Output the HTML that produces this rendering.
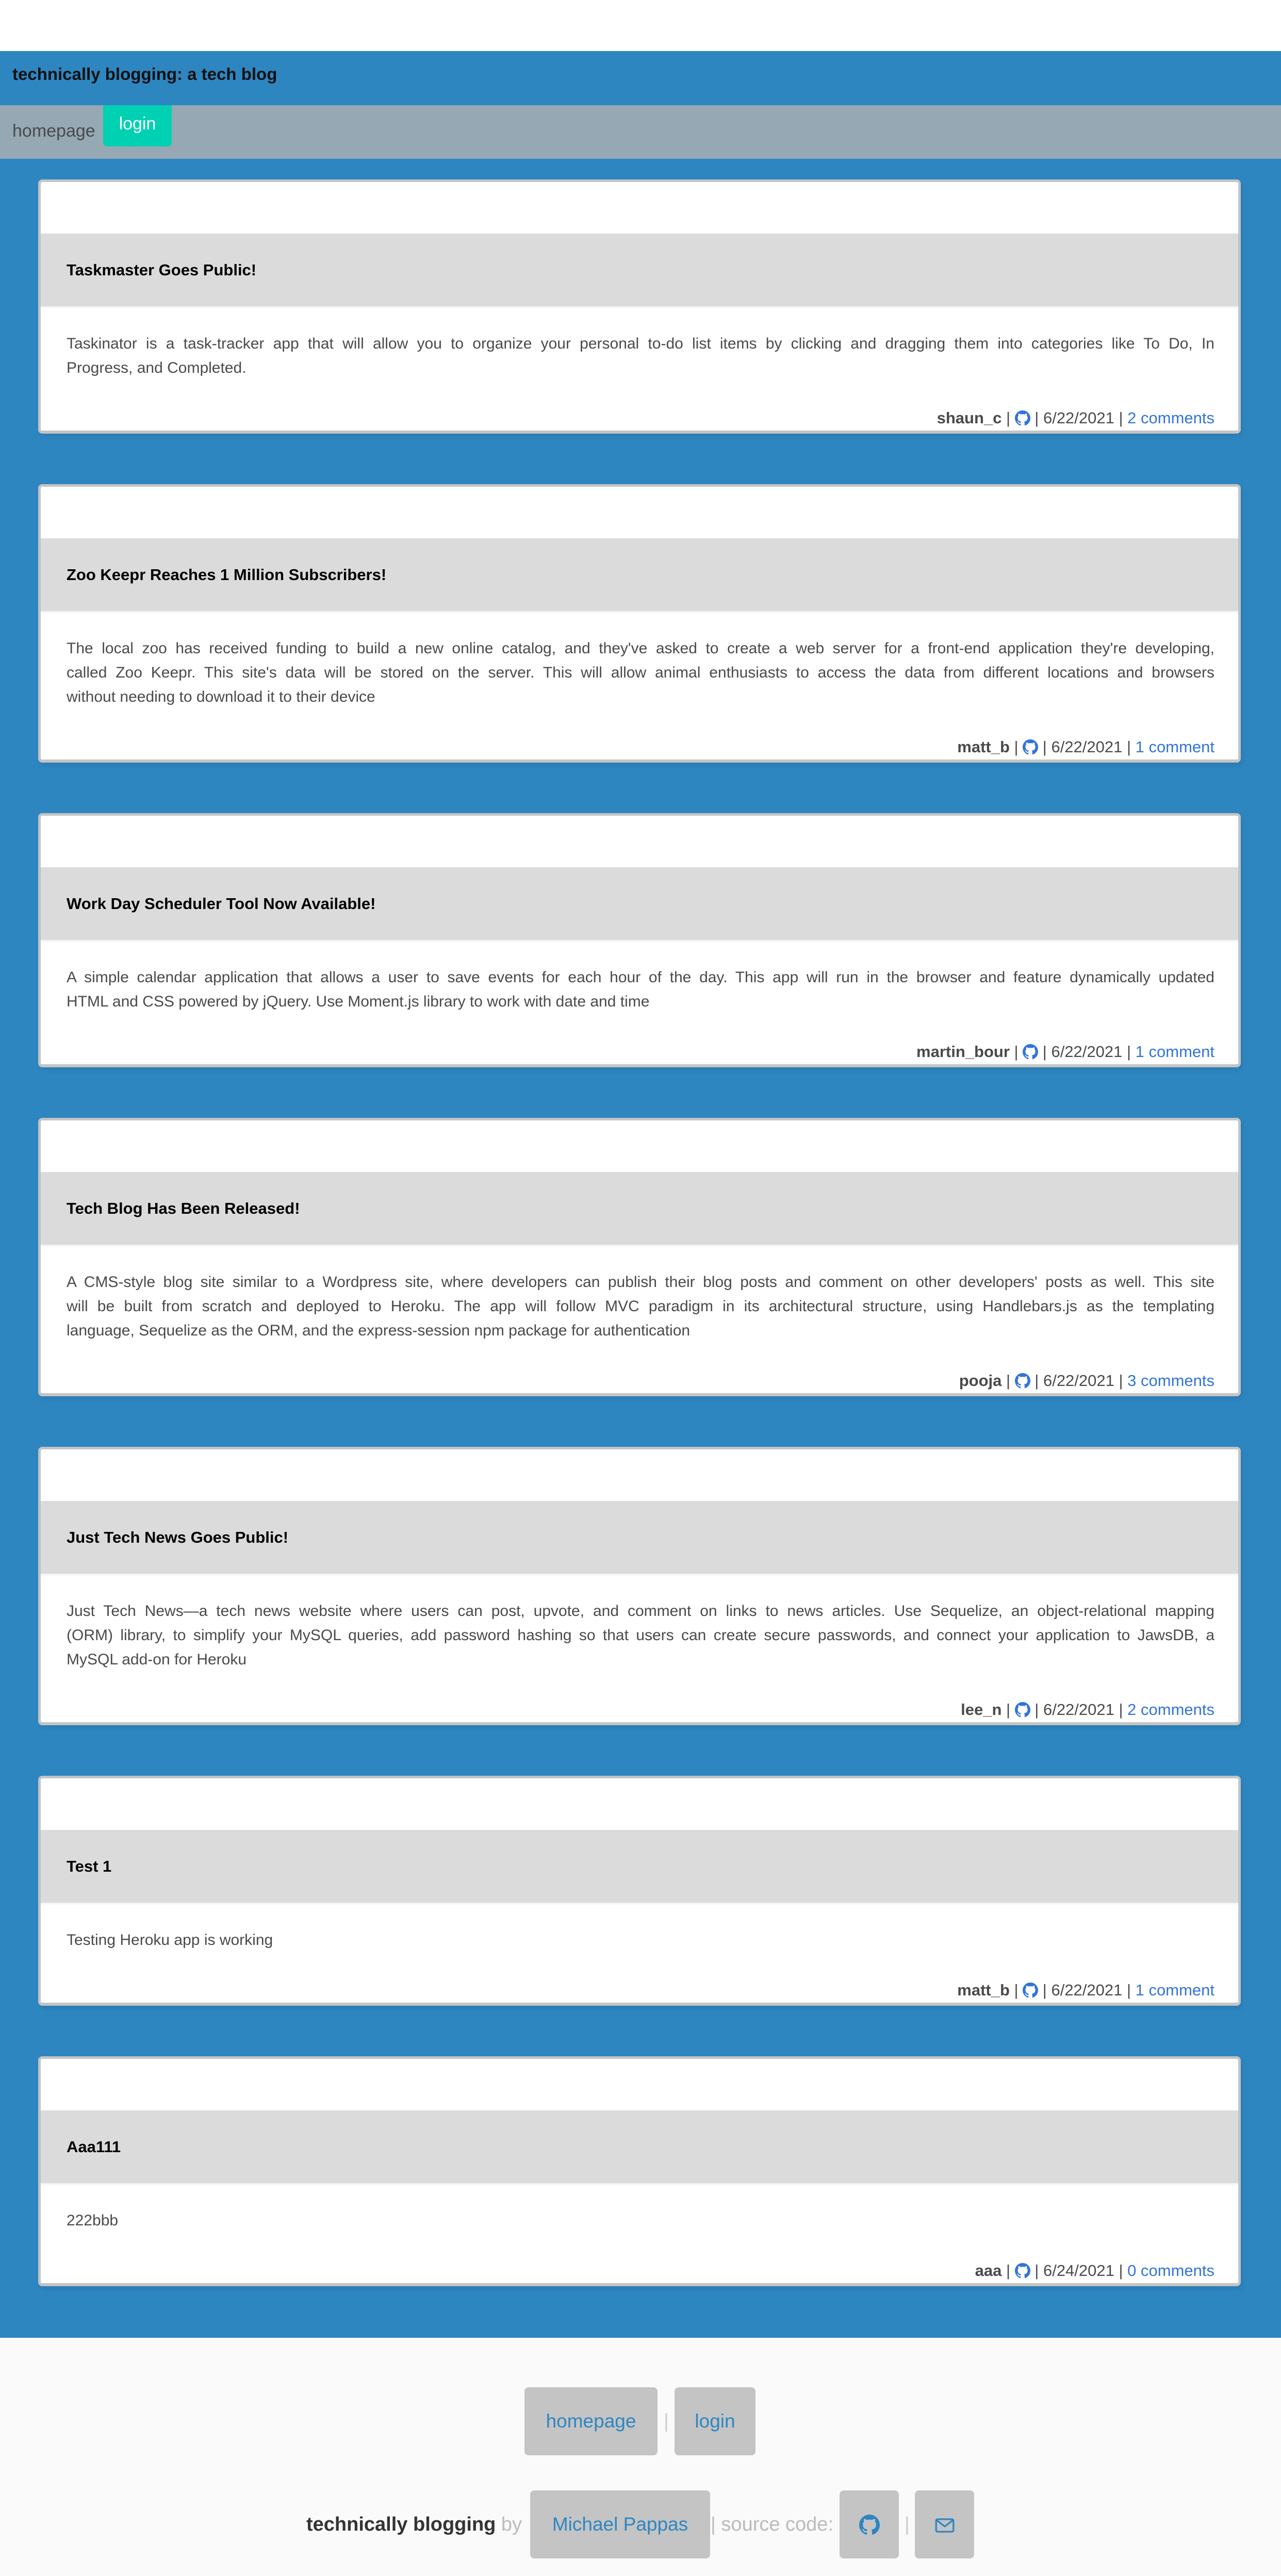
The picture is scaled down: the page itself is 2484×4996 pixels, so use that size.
<!DOCTYPE html>
<html><head><meta charset="utf-8">
<style>
*{box-sizing:border-box;margin:0;padding:0}
body{width:2484px;height:4992px;background:#fafafa;font-family:"Liberation Sans",Arial,sans-serif;overflow:hidden}
.top{height:99px;background:#fff}
.hdr{height:105px;background:#2e86c1;padding-left:24px;font-weight:bold;font-size:33px;line-height:90px;color:#111}
.nav{height:104px;background:#95a8b4;position:relative}
.nav .hp{position:absolute;left:24px;top:30px;font-size:34px;color:#4a4a4a;line-height:40px}
.nav .lg{position:absolute;left:200px;top:0;width:133px;height:80px;background:#00d1b2;border-radius:0 0 8px 8px;color:#fff;font-size:34px;text-align:center;line-height:72px}
main{background:#2e86c1;padding:40px 0 1px 0;height:4226px}
.card{margin:0 78px 98px 74px;background:#fff;border:5px solid #c4c4c4;border-bottom-width:6px;border-radius:8px;box-shadow:4px 6px 10px rgba(0,0,0,.08)}
.card .sp{height:100px}
.card h2{height:141px;background:#dbdbdb;font-size:31px;line-height:141px;padding-left:50px;color:#000;box-shadow:0 3px 4px rgba(0,0,0,.06)}
.card .bd{padding:49px 46px 4px 50px;color:#4a4a4a;font-size:30px}
.ln{line-height:47px;height:47px;text-align:justify;text-align-last:justify;white-space:nowrap}
.ln.l{text-align-last:left}
.meta{margin-top:54px;height:40px;line-height:40px;text-align:right;font-size:31px;color:#4a4a4a;white-space:nowrap}
.meta b{font-weight:bold}
.meta a{color:#3273dc;text-decoration:none}
.meta svg{width:30px;height:30px;vertical-align:-5px;fill:#3273dc}
footer{position:relative;height:462px}
.fb{position:absolute;background:#c4c4c4;border-radius:8px;color:#2e86c1;font-size:37px;text-align:center;line-height:132px;height:132px}
.ft{position:absolute;font-size:38px;line-height:40px}
</style></head><body>
<svg width="0" height="0" style="position:absolute"><defs><symbol id="gh" viewBox="0 0 16 16"><path d="M8 0C3.58 0 0 3.58 0 8c0 3.54 2.29 6.53 5.47 7.59.4.07.55-.17.55-.38 0-.19-.01-.82-.01-1.49-2.01.37-2.53-.49-2.69-.94-.09-.23-.48-.94-.82-1.13-.28-.15-.68-.52-.01-.53.63-.01 1.08.58 1.23.82.72 1.21 1.87.87 2.33.66.07-.52.28-.87.51-1.07-1.78-.2-3.64-.89-3.64-3.95 0-.87.31-1.59.82-2.15-.08-.2-.36-1.02.08-2.12 0 0 .67-.21 2.2.82.64-.18 1.32-.27 2-.27.68 0 1.36.09 2 .27 1.53-1.04 2.2-.82 2.2-.82.44 1.1.16 1.92.08 2.12.51.56.82 1.27.82 2.15 0 3.07-1.87 3.75-3.65 3.95.29.25.54.73.54 1.48 0 1.07-.01 1.93-.01 2.2 0 .21.15.46.55.38A8 8 0 0016 8c0-4.42-3.58-8-8-8z"/></symbol></defs></svg>
<div class="top"></div>
<div class="hdr">technically blogging: a tech blog</div>
<div class="nav"><span class="hp">homepage</span><span class="lg">login</span></div>
<main>
<div class="card"><div class="sp"></div><h2>Taskmaster Goes Public!</h2><div class="bd">
<div class="ln">Taskinator is a task-tracker app that will allow you to organize your personal to-do list items by clicking and dragging them into categories like To Do, In</div>
<div class="ln l">Progress, and Completed.</div>
<div class="meta"><b>shaun_c</b> | <svg><use href="#gh"/></svg> | 6/22/2021 | <a>2 comments</a></div></div></div>

<div class="card"><div class="sp"></div><h2>Zoo Keepr Reaches 1 Million Subscribers!</h2><div class="bd">
<div class="ln">The local zoo has received funding to build a new online catalog, and they've asked to create a web server for a front-end application they're developing,</div>
<div class="ln">called Zoo Keepr. This site's data will be stored on the server. This will allow animal enthusiasts to access the data from different locations and browsers</div>
<div class="ln l">without needing to download it to their device</div>
<div class="meta"><b>matt_b</b> | <svg><use href="#gh"/></svg> | 6/22/2021 | <a>1 comment</a></div></div></div>

<div class="card"><div class="sp"></div><h2>Work Day Scheduler Tool Now Available!</h2><div class="bd">
<div class="ln">A simple calendar application that allows a user to save events for each hour of the day. This app will run in the browser and feature dynamically updated</div>
<div class="ln l">HTML and CSS powered by jQuery. Use Moment.js library to work with date and time</div>
<div class="meta"><b>martin_bour</b> | <svg><use href="#gh"/></svg> | 6/22/2021 | <a>1 comment</a></div></div></div>

<div class="card"><div class="sp"></div><h2>Tech Blog Has Been Released!</h2><div class="bd">
<div class="ln">A CMS-style blog site similar to a Wordpress site, where developers can publish their blog posts and comment on other developers' posts as well. This site</div>
<div class="ln">will be built from scratch and deployed to Heroku. The app will follow MVC paradigm in its architectural structure, using Handlebars.js as the templating</div>
<div class="ln l">language, Sequelize as the ORM, and the express-session npm package for authentication</div>
<div class="meta"><b>pooja</b> | <svg><use href="#gh"/></svg> | 6/22/2021 | <a>3 comments</a></div></div></div>

<div class="card"><div class="sp"></div><h2>Just Tech News Goes Public!</h2><div class="bd">
<div class="ln">Just Tech News—a tech news website where users can post, upvote, and comment on links to news articles. Use Sequelize, an object-relational mapping</div>
<div class="ln">(ORM) library, to simplify your MySQL queries, add password hashing so that users can create secure passwords, and connect your application to JawsDB, a</div>
<div class="ln l">MySQL add-on for Heroku</div>
<div class="meta"><b>lee_n</b> | <svg><use href="#gh"/></svg> | 6/22/2021 | <a>2 comments</a></div></div></div>

<div class="card"><div class="sp"></div><h2>Test 1</h2><div class="bd">
<div class="ln l">Testing Heroku app is working</div>
<div class="meta"><b>matt_b</b> | <svg><use href="#gh"/></svg> | 6/22/2021 | <a>1 comment</a></div></div></div>

<div class="card"><div class="sp"></div><h2>Aaa111</h2><div class="bd">
<div class="ln l">222bbb</div>
<div class="meta"><b>aaa</b> | <svg><use href="#gh"/></svg> | 6/24/2021 | <a>0 comments</a></div></div></div>
</main>
<footer>
<div class="fb" style="left:1017px;top:96px;width:258px">homepage</div>
<div class="ft" style="left:1287px;top:142px;color:#ccc">|</div>
<div class="fb" style="left:1308px;top:96px;width:157px">login</div>
<div class="ft" style="left:594px;top:342px;color:#333;font-weight:bold">technically blogging <span style="color:#bbb;font-weight:normal">by</span></div>
<div class="fb" style="left:1028px;top:296px;width:349px">Michael Pappas</div>
<div class="ft" style="left:1378px;top:342px;color:#bbb">| source code:</div>
<div class="fb" style="left:1628px;top:296px;width:115px"><svg style="width:40px;height:40px;vertical-align:-9px;fill:#2e86c1"><use href="#gh"/></svg></div>
<div class="ft" style="left:1754px;top:342px;color:#ccc">|</div>
<div class="fb" style="left:1774px;top:296px;width:115px"><svg viewBox="0 0 40 30" style="width:38px;height:28px;vertical-align:-4px"><rect x="2" y="2" width="36" height="26" rx="3" fill="none" stroke="#2e86c1" stroke-width="3.5"/><path d="M3 4 L20 17 L37 4" fill="none" stroke="#2e86c1" stroke-width="3.5"/></svg></div>
</footer>
</body></html>
